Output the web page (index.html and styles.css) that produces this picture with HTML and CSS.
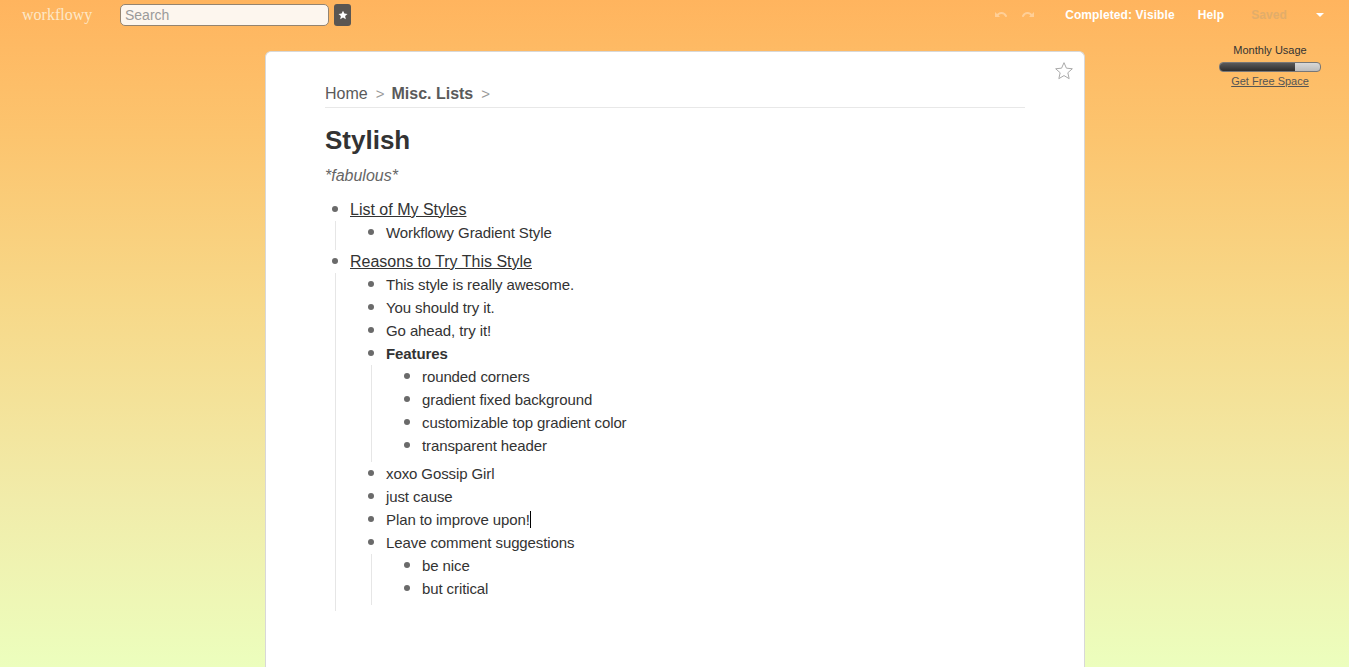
FILE: index.html
```html
<!DOCTYPE html>
<html>
<head>
<meta charset="utf-8">
<link rel="stylesheet" href="styles.css">
</head>
<body>
<div class="header">
  <div class="logo">workflowy</div>
  <div class="search-box"><input class="search" type="text" placeholder="Search"></div>
  <div class="star-btn"><svg width="10" height="10" viewBox="0 0 24 24"><path d="M12 1.5l3.2 7 7.6.8-5.7 5.1 1.6 7.5L12 18l-6.7 3.9 1.6-7.5L1.2 9.3l7.6-.8z" fill="#fff"/></svg></div>
  <div class="spacer"></div>
  <div class="undo-redo">
    <svg width="14" height="10" viewBox="0 0 14 10"><path d="M3 6 C5 2 10 2 12 6" fill="none" stroke="#fff" stroke-width="2" stroke-linecap="round"/><path d="M1 2 L1 7 L6 7 Z" fill="#fff"/></svg>
    <svg width="14" height="10" viewBox="0 0 14 10"><path d="M2 6 C4 2 9 2 11 6" fill="none" stroke="#fff" stroke-width="2" stroke-linecap="round"/><path d="M13 2 L13 7 L8 7 Z" fill="#fff"/></svg>
  </div>
  <div class="nav-link completed">Completed: Visible</div>
  <div class="nav-link help">Help</div>
  <div class="nav-link saved">Saved</div>
  <div class="dropdown"></div>
</div>

<div class="main">
  <div class="side-left"></div>
  <div class="card">
    <svg class="card-star" width="20" height="20" viewBox="0 0 24 24"><path d="M12 2l2.9 6.6 7.1.7-5.4 4.8 1.6 7.1L12 17.5l-6.2 3.7 1.6-7.1L2 9.3l7.1-.7z" fill="none" stroke="#aaa" stroke-width="1.2" stroke-linejoin="round"/></svg>
    <div class="breadcrumb"><span class="crumb">Home</span><span class="sep">&gt;</span><span class="crumb current">Misc. Lists</span><span class="sep">&gt;</span></div>
    <h1 class="title">Stylish</h1>
    <div class="note">*fabulous*</div>

    <div class="tree">
      <div class="node top">
        <div class="row"><span class="bullet"></span><span class="text link">List of My Styles</span></div>
        <div class="children">
          <div class="node"><div class="row"><span class="bullet"></span><span class="text">Workflowy Gradient Style</span></div></div>
        </div>
      </div>
      <div class="node top">
        <div class="row"><span class="bullet"></span><span class="text link">Reasons to Try This Style</span></div>
        <div class="children">
          <div class="node"><div class="row"><span class="bullet"></span><span class="text">This style is really awesome.</span></div></div>
          <div class="node"><div class="row"><span class="bullet"></span><span class="text">You should try it.</span></div></div>
          <div class="node"><div class="row"><span class="bullet"></span><span class="text">Go ahead, try it!</span></div></div>
          <div class="node">
            <div class="row"><span class="bullet"></span><span class="text bold">Features</span></div>
            <div class="children">
              <div class="node"><div class="row"><span class="bullet"></span><span class="text">rounded corners</span></div></div>
              <div class="node"><div class="row"><span class="bullet"></span><span class="text">gradient fixed background</span></div></div>
              <div class="node"><div class="row"><span class="bullet"></span><span class="text">customizable top gradient color</span></div></div>
              <div class="node"><div class="row"><span class="bullet"></span><span class="text">transparent header</span></div></div>
            </div>
          </div>
          <div class="node"><div class="row"><span class="bullet"></span><span class="text">xoxo Gossip Girl</span></div></div>
          <div class="node"><div class="row"><span class="bullet"></span><span class="text">just cause</span></div></div>
          <div class="node"><div class="row"><span class="bullet"></span><span class="text">Plan to improve upon!<span class="caret"></span></span></div></div>
          <div class="node">
            <div class="row"><span class="bullet"></span><span class="text">Leave comment suggestions</span></div>
            <div class="children">
              <div class="node"><div class="row"><span class="bullet"></span><span class="text">be nice</span></div></div>
              <div class="node"><div class="row"><span class="bullet"></span><span class="text">but critical</span></div></div>
            </div>
          </div>
        </div>
      </div>
    </div>
  </div>
  <div class="side-right">
    <div class="usage">
      <div class="usage-label">Monthly Usage</div>
      <div class="usage-bar"><div class="usage-fill" style="width:75%"></div></div>
      <div class="usage-link">Get Free Space</div>
    </div>
  </div>
</div>
</body>
</html>
```

FILE: styles.css
```css
html, body {
  margin: 0;
  padding: 0;
  height: 100%;
}
body {
  font-family: "Liberation Sans", Arial, sans-serif;
  background: linear-gradient(to bottom, #ffb45e 0%, #fcc46e 20%, #f7d888 45%, #f1ecaa 75%, #ecfebd 100%) fixed;
  overflow: hidden;
  color: #333;
}
.header {
  height: 29px;
  display: flex;
  align-items: center;
  padding: 0 0 0 22px;
}
.logo {
  font-family: "Liberation Serif", "Times New Roman", serif;
  font-size: 16px;
  color: #fde8c8;
  width: 98px;
}
.search-box {
  display: flex;
}
.search {
  width: 209px;
  height: 22px;
  box-sizing: border-box;
  border: 1px solid #948470;
  border-radius: 5px;
  background: #fdf6ee;
  padding: 1px 4px 0;
  font-family: "Liberation Sans", Arial, sans-serif;
  font-size: 14px;
  color: #333;
  outline: none;
}
.search::placeholder {
  color: #9a9a9a;
}
.star-btn {
  width: 17px;
  height: 22px;
  margin-left: 5px;
  background: #5a5652;
  border-radius: 3px;
  display: flex;
  align-items: center;
  justify-content: center;
}
.spacer {
  flex: 1;
}
.undo-redo {
  display: flex;
  gap: 13px;
  opacity: 0.35;
  margin-right: 30px;
  margin-top: 1px;
}
.nav-link {
  font-size: 12px;
  font-weight: bold;
  color: #fff;
  letter-spacing: 0.1px;
}
.completed {
  margin-right: 23px;
}
.help {
  margin-right: 27px;
}
.saved {
  color: #e2ad6a;
  margin-right: 29px;
}
.dropdown {
  width: 0;
  height: 0;
  border-left: 4px solid transparent;
  border-right: 4px solid transparent;
  border-top: 4px solid #fff;
  margin-right: 25px;
  margin-top: 1px;
}

.main {
  display: flex;
  padding-top: 22px;
}
.side-left {
  width: 265px;
  flex: none;
}
.card {
  position: relative;
  width: 700px;
  flex: none;
  background: #fff;
  border: 1px solid #d8d8d8;
  border-bottom: none;
  border-radius: 6px 6px 0 0;
  padding: 32px 59px 0 59px;
  height: 600px;
  box-sizing: content-box;
}
.card-star {
  position: absolute;
  top: 9px;
  right: 10px;
}
.breadcrumb {
  font-size: 16px;
  line-height: 20px;
  color: #555;
  padding-bottom: 3px;
  border-bottom: 1px solid #e8e8e8;
}
.crumb {
  color: #5a5a5a;
}
.crumb.current {
  font-weight: bold;
}
.sep {
  color: #999;
  margin: 0 7px 0 8px;
  font-size: 15px;
}
.title {
  font-size: 26px;
  line-height: 32px;
  font-weight: bold;
  color: #333;
  margin: 16px 0 0 0;
}
.note {
  font-size: 16px;
  line-height: 22px;
  font-style: italic;
  color: #666;
  margin-top: 9px;
}
.tree {
  margin-top: 11px;
}
.row {
  display: flex;
  align-items: center;
  height: 23px;
}
.bullet {
  width: 20px;
  height: 23px;
  flex: none;
  position: relative;
}
.bullet::after {
  content: "";
  position: absolute;
  left: 7px;
  top: 8px;
  width: 6px;
  height: 6px;
  border-radius: 50%;
  background: #6a6a6a;
}
.text {
  margin-left: 5px;
  font-size: 15px;
  color: #333;
  letter-spacing: -0.1px;
}
.node.top > .row > .text {
  font-size: 16px;
  letter-spacing: 0;
}
.link {
  text-decoration: underline;
}
.bold {
  font-weight: bold;
}
.children {
  margin-left: 10px;
  border-left: 1px solid #e6e6e6;
  padding-left: 25px;
  padding-bottom: 5px;
}
.node.top > .children {
  padding-bottom: 6px;
}
.caret {
  display: inline-block;
  width: 1px;
  height: 17px;
  background: #000;
  vertical-align: -3px;
}

.side-right {
  flex: 1;
  display: flex;
  justify-content: flex-end;
  padding-right: 28px;
}
.usage {
  width: 102px;
  display: flex;
  flex-direction: column;
  align-items: center;
  font-size: 11px;
  color: #333;
}
.usage-label {
  line-height: 13px;
  margin-top: -7px;
}
.usage-bar {
  width: 102px;
  height: 10px;
  margin-top: 5px;
  border-radius: 4px;
  background: linear-gradient(#d8d8d8, #bcbcbc);
  border: 1px solid #777;
  box-sizing: border-box;
  overflow: hidden;
}
.usage-fill {
  height: 100%;
  background: linear-gradient(#5a5a5a, #2e2e2e);
}
.usage-link {
  margin-top: 3px;
  text-decoration: underline;
  color: #555;
  line-height: 13px;
}
```
